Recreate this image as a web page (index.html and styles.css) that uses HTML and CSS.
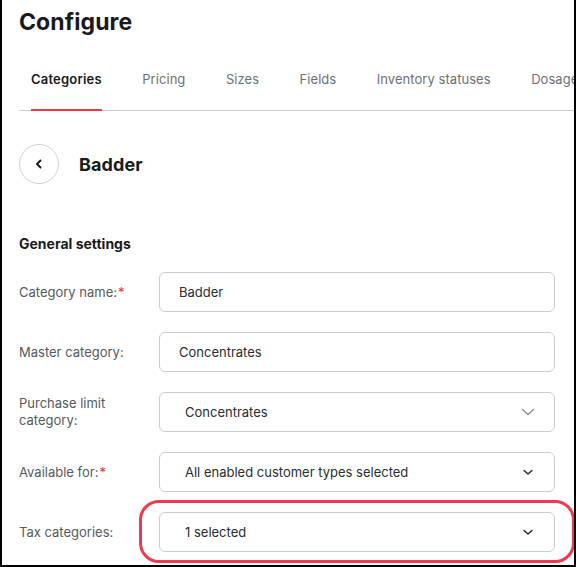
FILE: index.html
```html
<!DOCTYPE html>
<html>
<head>
<meta charset="utf-8">
<link rel="stylesheet" href="styles.css">
</head>
<body>
<div class="frame">
  <h1 class="title">Configure</h1>
  <nav class="tabs">
    <span class="tab active">Categories</span>
    <span class="tab">Pricing</span>
    <span class="tab">Sizes</span>
    <span class="tab">Fields</span>
    <span class="tab">Inventory statuses</span>
    <span class="tab">Dosage</span>
  </nav>
  <div class="header">
    <button class="back" aria-label="Back">
      <svg width="12" height="12" viewBox="0 0 12 12"><path d="M7.5 2.5 L4 6 L7.5 9.5" fill="none" stroke="#1a1a1a" stroke-width="2" stroke-linecap="round" stroke-linejoin="round"/></svg>
    </button>
    <h2 class="name">Badder</h2>
  </div>
  <h3 class="section">General settings</h3>
  <div class="form">
    <div class="row">
      <label class="label">Category name:<span class="req">*</span></label>
      <div class="field">Badder</div>
    </div>
    <div class="row">
      <label class="label">Master category:</label>
      <div class="field">Concentrates</div>
    </div>
    <div class="row">
      <label class="label">Purchase limit<br>category:</label>
      <div class="field select">Concentrates<svg class="chev light" width="14" height="8" viewBox="0 0 14 8"><path d="M1.5 1.5 L7 6.5 L12.5 1.5" fill="none" stroke="#8a8f96" stroke-width="1.4" stroke-linecap="round" stroke-linejoin="round"/></svg></div>
    </div>
    <div class="row">
      <label class="label">Available for:<span class="req">*</span></label>
      <div class="field select">All enabled customer types selected<svg class="chev" width="12" height="7" viewBox="0 0 12 7"><path d="M2 1.5 L6 5 L10 1.5" fill="none" stroke="#2a2d31" stroke-width="1.6" stroke-linecap="round" stroke-linejoin="round"/></svg></div>
    </div>
    <div class="row last">
      <label class="label">Tax categories:</label>
      <div class="field select">1 selected<svg class="chev" width="12" height="7" viewBox="0 0 12 7"><path d="M2 1.5 L6 5 L10 1.5" fill="none" stroke="#2a2d31" stroke-width="1.6" stroke-linecap="round" stroke-linejoin="round"/></svg></div>
      <div class="ring"></div>
    </div>
  </div>
</div>
</body>
</html>
```

FILE: styles.css
```css
* { box-sizing: border-box; }
html, body { margin: 0; padding: 0; background: #fff; }
body { font-family: Inter, "Noto Sans", sans-serif; color: #1a1a1a; }
.frame {
  position: relative;
  width: 576px;
  height: 567px;
  border-left: 2px solid #000;
  border-right: 2px solid #000;
  border-bottom: 2px solid #000;
  overflow: hidden;
  padding-left: 17px;
}
.title {
  margin: 0;
  padding-top: 8px;
  height: 50px;
  font-size: 23px;
  font-weight: 700;
  letter-spacing: 0.1px;
  line-height: 28px;
}
.tabs {
  display: flex;
  gap: 40.5px;
  padding-left: 12px;
  border-bottom: 1px solid #c9ccd0;
  height: 61px;
  align-items: center;
  white-space: nowrap;
  padding-bottom: 2px;
}
.tab {
  font-size: 13px;
  color: #6c7076;
  line-height: 16px;
  position: relative;
  height: 58px;
  display: flex;
  align-items: center;
  letter-spacing: 0.05px;
}
.tab.active { color: #1a1a1a; font-weight: 600; letter-spacing: 0.2px; }
.tab.active::after {
  content: "";
  position: absolute;
  left: 0; right: 0; bottom: -3px;
  height: 2px;
  background: #ee3a4c;
}
.header {
  display: flex;
  align-items: center;
  gap: 20px;
  margin-top: 33px;
  height: 40px;
}
.back {
  width: 40px; height: 40px;
  border-radius: 50%;
  border: 1px solid #cfd2d6;
  background: #fff;
  display: flex; align-items: center; justify-content: center;
  padding: 0;
}
.name { margin: 0; font-size: 18px; font-weight: 700; letter-spacing: 0.1px; }
.section {
  margin: 51px 0 0 0;
  font-size: 14px;
  font-weight: 700;
  line-height: 17px;
}
.form { margin-top: 20px; display: flex; flex-direction: column; gap: 20px; }
.row {
  position: relative;
  display: grid;
  grid-template-columns: 140px 396px;
  align-items: center;
  height: 40px;
}
.label { font-size: 13px; color: #555a60; line-height: 17px; }
.req { color: #e0303f; margin-left: 1px; }
.field {
  height: 40px;
  border: 1px solid #c9cdd1;
  border-radius: 6px;
  display: flex;
  align-items: center;
  padding-left: 19px;
  padding-right: 20px;
  font-size: 13px;
  color: #2a2d31;
}
.field.select { padding-left: 25px; justify-content: space-between; }
.chev.light { margin-right: -1px; }
.ring {
  position: absolute;
  left: 120px;
  top: -12px;
  width: 436px;
  height: 63px;
  border: 3px solid #ee3a4c;
  border-radius: 20px;
  pointer-events: none;
}
```
